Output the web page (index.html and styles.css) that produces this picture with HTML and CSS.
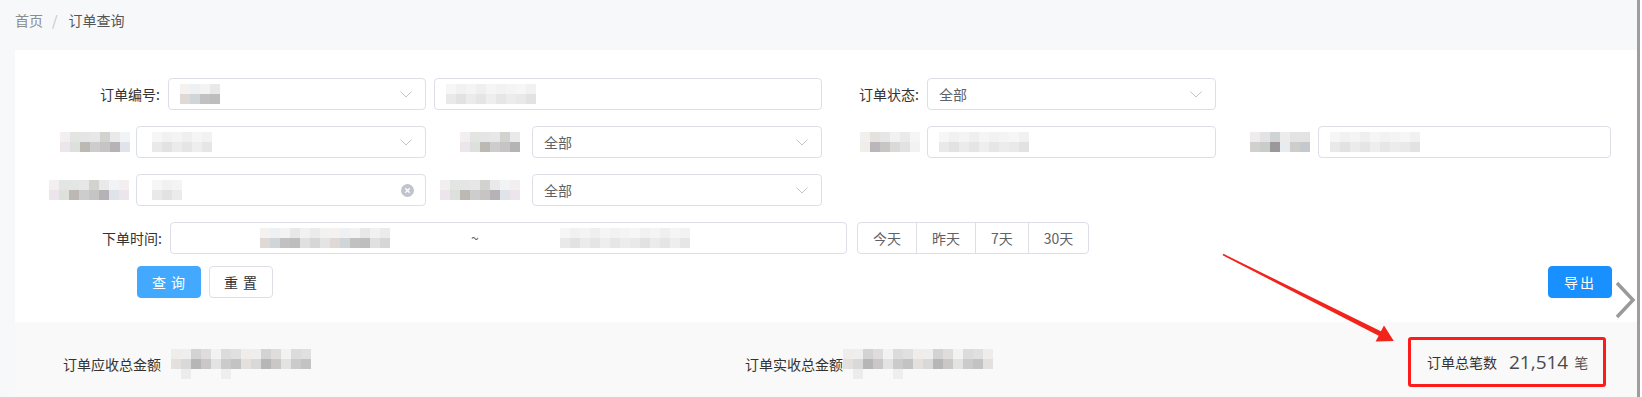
FILE: index.html
```html
<!DOCTYPE html>
<html lang="zh-CN">
<head>
<meta charset="utf-8">
<title>订单查询</title>
<link rel="stylesheet" href="styles.css">
</head>
<body>
<div class="page">
  <div class="main">
    <div class="crumb">
      <span class="crumb-link">首页</span>
      <span class="crumb-sep">/</span>
      <span class="crumb-cur">订单查询</span>
    </div>

    <div class="panel">
      <div class="row">
        <label class="lbl l153">订单编号:</label>
        <div class="ctl sel w258"><span class="mz mz-val m40"></span><svg class="arr" viewBox="0 0 12 7"><polyline points="0.5,0.5 6,6 11.5,0.5"/></svg></div>
        <div class="ctl inp w388 ml8"><span class="mz mz-soft m90"></span></div>
        <label class="lbl l105">订单状态:</label>
        <div class="ctl sel w289"><span class="val">全部</span><svg class="arr" viewBox="0 0 12 7"><polyline points="0.5,0.5 6,6 11.5,0.5"/></svg></div>
      </div>

      <div class="row">
        <label class="lbl l121 p6"><span class="mz mz-label m70"></span></label>
        <div class="ctl sel w290"><span class="mz mz-soft m60 ml4"></span><svg class="arr" viewBox="0 0 12 7"><polyline points="0.5,0.5 6,6 11.5,0.5"/></svg></div>
        <label class="lbl l106 p12"><span class="mz mz-label m60"></span></label>
        <div class="ctl sel w290"><span class="val">全部</span><svg class="arr" viewBox="0 0 12 7"><polyline points="0.5,0.5 6,6 11.5,0.5"/></svg></div>
        <label class="lbl l105 p7"><span class="mz mz-dark m60"></span></label>
        <div class="ctl inp w289"><span class="mz mz-soft m90"></span></div>
        <label class="lbl l102 p8"><span class="mz mz-deep m60"></span></label>
        <div class="ctl inp w293"><span class="mz mz-soft m90"></span></div>
      </div>

      <div class="row">
        <label class="lbl l121 p7"><span class="mz mz-label m80"></span></label>
        <div class="ctl inp w290 clearable"><span class="mz mz-soft m30 ml4"></span><svg class="clear" viewBox="0 0 14 14"><circle cx="7" cy="7" r="7"/><path d="M4.6 4.6 9.4 9.4M9.4 4.6 4.6 9.4"/></svg></div>
        <label class="lbl l106 p12"><span class="mz mz-label m80"></span></label>
        <div class="ctl sel w290"><span class="val">全部</span><svg class="arr" viewBox="0 0 12 7"><polyline points="0.5,0.5 6,6 11.5,0.5"/></svg></div>
      </div>

      <div class="row">
        <label class="lbl l155">下单时间:</label>
        <div class="ctl range w677">
          <span class="mz mz-val m130 range-start"></span>
          <span class="range-sep">~</span>
          <span class="mz mz-soft m130 range-end"></span>
        </div>
        <div class="btn-group">
          <button class="seg">今天</button>
          <button class="seg">昨天</button>
          <button class="seg">7天</button>
          <button class="seg">30天</button>
        </div>
      </div>

      <div class="row row-btns">
        <button class="btn btn-primary">查 询</button>
        <button class="btn btn-plain">重 置</button>
        <button class="btn btn-export">导出</button>
      </div>
    </div>

    <div class="summary">
      <div class="sum-item">
        <span class="sum-label">订单应收总金额</span>
        <span class="mz mz3 m140 ml10"></span>
      </div>
      <div class="sum-item">
        <span class="sum-label">订单实收总金额</span>
        <span class="mz mz3 m150"></span>
      </div>
      <div class="sum-box">
        <span class="sum-label">订单总笔数</span>
        <span class="sum-num">21,514</span>
        <span class="sum-unit">笔</span>
      </div>
    </div>
  </div>
  <div class="edge"></div>
  <div class="edge-white"></div>
</div>

<svg class="chev" viewBox="0 0 22 38"><polyline points="3,2 19,19 3,36"/></svg>

<svg class="annot" viewBox="0 0 1642 397">
  <polygon points="1223.4,253.8 1380.9,331.3 1384,325.6 1393.8,341 1375.6,341.4 1378.7,335.7 1222.6,255.2"/>
</svg>
</body>
</html>
```

FILE: styles.css
```css
* { box-sizing: border-box; }

body {
  margin: 0;
  width: 1642px;
  height: 397px;
  overflow: hidden;
  position: relative;
  background: #f7f8fa;
  font-family: "Noto Sans CJK SC", "Noto Sans", sans-serif;
  font-size: 14px;
  color: #333;
}

.page { display: flex; height: 397px; }
.main { width: 1622px; margin-left: 15px; display: flex; flex-direction: column; }
.edge { width: 3px; background: #9e9e9e; }
.edge-white { flex: 1; background: #fff; }

/* breadcrumb */
.crumb { height: 50px; padding-top: 10px; line-height: 20px; display: flex; }
.crumb-link { color: #8c8c8c; }
.crumb-sep { color: #c0c4cc; margin: 0 11px 0 9px; }
.crumb-cur { color: #555; }

/* panel */
.panel {
  background: #fff;
  padding: 28px 25px 24px 0;
  display: flex;
  flex-direction: column;
  gap: 16px;
}
.row { display: flex; align-items: center; height: 32px; }
.row-btns { margin-top: -4px; padding-left: 122px; }

.lbl {
  flex: none;
  display: flex;
  justify-content: flex-end;
  align-items: center;
  padding-right: 8px;
  color: #333;
  white-space: nowrap;
  line-height: 20px;
}
.l153 { width: 153px; }
.l155 { width: 155px; }
.l121 { width: 121px; }
.l106 { width: 106px; }
.l105 { width: 105px; }
.l102 { width: 102px; }
.p6 { padding-right: 6px; }
.p7 { padding-right: 7px; }
.p8 { padding-right: 8px; }
.p12 { padding-right: 12px; }

.ctl {
  flex: none;
  height: 32px;
  border: 1px solid #dcdfe6;
  border-radius: 4px;
  background: #fff;
  display: flex;
  align-items: center;
  padding: 0 13px 0 11px;
  color: #606266;
  line-height: 20px;
}
.sel, .clearable { justify-content: space-between; }
.w258 { width: 258px; }
.w388 { width: 388px; }
.w289 { width: 289px; }
.w290 { width: 290px; }
.w293 { width: 293px; }
.w677 { width: 677px; }
.ml4 { margin-left: 4px; }
.ml8 { margin-left: 8px; }
.ml10 { margin-left: 10px; }

.val { color: #606266; }
.arr { width: 12px; height: 7px; flex: none; }
.arr polyline { fill: none; stroke: #c0c4cc; stroke-width: 1; }
.clear { width: 13px; height: 13px; flex: none; margin-right: -2px; }
.clear circle { fill: #c0c4cc; }
.clear path { stroke: #fff; stroke-width: 1.4; fill: none; }

/* date range */
.range { padding: 0; }
.range-start { margin-left: 89px; }
.range-sep { margin-left: 81px; color: #606266; width: 8px; text-align: center; }
.range-end { margin-left: 81px; }

.btn-group { display: flex; margin-left: 10px; }
.seg {
  height: 32px;
  padding: 0 15px;
  border: 1px solid #dcdfe6;
  background: #fff;
  color: #606266;
  font: inherit;
  font-size: 14px;
  line-height: 20px;
  margin-left: -1px;
}
.seg:first-child { border-radius: 4px 0 0 4px; margin-left: 0; }
.seg:last-child { border-radius: 0 4px 4px 0; }

.btn {
  width: 64px;
  height: 32px;
  border-radius: 4px;
  font: inherit;
  font-size: 14px;
  line-height: 20px;
  padding: 0;
  letter-spacing: 1px;
}
.btn-primary { background: #42a9ff; border: 1px solid #42a9ff; color: #fff; }
.btn-plain { background: #fff; border: 1px solid #dcdfe6; color: #333; margin-left: 8px; }
.btn-export { background: #1890ff; border: 1px solid #1890ff; color: #fff; margin-left: auto; letter-spacing: 2px; }

/* mosaic (redacted content) */
.mz {
  display: inline-block;
  flex: none;
  height: 20px;
  background-image:
    repeating-linear-gradient(90deg, var(--a1) 0 10px, var(--a2) 10px 20px, var(--a3) 20px 30px, var(--a4) 30px 40px, var(--a5) 40px 50px, var(--a6) 50px 60px, var(--a7) 60px 70px),
    repeating-linear-gradient(90deg, var(--b1) 0 10px, var(--b2) 10px 20px, var(--b3) 20px 30px, var(--b4) 30px 40px, var(--b5) 40px 50px, var(--b6) 50px 60px, var(--b7) 60px 70px);
  background-size: 100% 10px, 100% 10px;
  background-position: 0 0, 0 10px;
  background-repeat: no-repeat;
}
.mz-val {
  --a1: #f4f1f0; --a2: #eef0f1; --a3: #f3f3f3; --a4: #e8e8e8; --a5: #f1f1f1; --a6: #ebebeb; --a7: #f2f2f2;
  --b1: #ded9d6; --b2: #d0d6d8; --b3: #c1c1c1; --b4: #bebebe; --b5: #e0e0e0; --b6: #d6d6d6; --b7: #e4e4e4;
}
.mz-soft {
  --a1: #f6f6f6; --a2: #f1f1f1; --a3: #f4f4f4; --a4: #efefef; --a5: #f5f5f5; --a6: #f2f2f2; --a7: #f4f4f4;
  --b1: #e9e9e9; --b2: #e2e2e2; --b3: #ebebeb; --b4: #e5e5e5; --b5: #eeeeee; --b6: #e6e6e6; --b7: #ececec;
}
.mz-label {
  --a1: #f3eff1; --a2: #e2e5e2; --a3: #e4e5e5; --a4: #e7e7e7; --a5: #d2d3cf; --a6: #e9e9e9; --a7: #f1f3f5;
  --b1: #ece6ec; --b2: #dde0db; --b3: #bcb9b4; --b4: #cdcdcd; --b5: #c7c5c3; --b6: #b6b3b6; --b7: #e0e4ea;
}
.mz-dark {
  --a1: #f2f0ee; --a2: #e4e1df; --a3: #e6e6e6; --a4: #f1f1f3; --a5: #eaeaea; --a6: #f5f5f5; --a7: #f5f5f5;
  --b1: #f1ede8; --b2: #b9b7b9; --b3: #c8c6c4; --b4: #d9d9d9; --b5: #e2e2e2; --b6: #f2f2f2; --b7: #f5f5f5;
}
.mz-deep {
  --a1: #efeced; --a2: #e3e3e3; --a3: #cfd3d4; --a4: #ececec; --a5: #e3e3e3; --a6: #e3e3e3; --a7: #f5f5f5;
  --b1: #d2d0ce; --b2: #c9cdc9; --b3: #9b979b; --b4: #e9ecee; --b5: #cfcdcb; --b6: #c5c8cc; --b7: #f2f4f2;
}
.mz3 {
  height: 30px;
  --a1: #efedec; --a2: #eeeeee; --a3: #d3d3d3; --a4: #dfdddc; --a5: #f2f2f2; --a6: #dcdcdc; --a7: #e0e0e0;
  --b1: #e4e0de; --b2: #d9d9d9; --b3: #b7b6b6; --b4: #c9c7c7; --b5: #e3e3e3; --b6: #cbcbcb; --b7: #c3c3c3;
  background-image:
    repeating-linear-gradient(90deg, var(--a1) 0 10px, var(--a2) 10px 20px, var(--a3) 20px 30px, var(--a4) 30px 40px, var(--a5) 40px 50px, var(--a6) 50px 60px, var(--a7) 60px 70px),
    repeating-linear-gradient(90deg, var(--b1) 0 10px, var(--b2) 10px 20px, var(--b3) 20px 30px, var(--b4) 30px 40px, var(--b5) 40px 50px, var(--b6) 50px 60px, var(--b7) 60px 70px),
    linear-gradient(90deg, transparent 0 10px, #ececec 10px 20px, transparent 20px 50px, #eeeeee 50px 60px, transparent 60px);
  background-size: 100% 10px, 100% 10px, 100% 10px;
  background-position: 0 0, 0 10px, 0 20px;
}
.m30 { width: 30px; }
.m40 { width: 40px; }
.m60 { width: 60px; }
.m70 { width: 70px; }
.m80 { width: 80px; }
.m90 { width: 90px; }
.m130 { width: 130px; }
.m140 { width: 140px; }
.m150 { width: 150px; }

/* summary */
.summary {
  flex: 1;
  background: #f9f9f9;
  display: grid;
  grid-template-columns: 682px 663px auto;
  padding: 15px 0 0 48px;
  align-items: start;
}
.sum-item { display: flex; align-items: center; height: 50px; padding-top: 4px; }
.sum-label { color: #333; line-height: 20px; }
.sum-box {
  width: 198px;
  height: 50px;
  border: 3px solid #fd1c1c;
  border-radius: 3px;
  display: flex;
  align-items: center;
  padding-left: 16px;
}
.sum-num {
  font-family: "Open Sans", "Noto Sans", sans-serif;
  font-size: 19px;
  color: #4a4a4a;
  margin: 0 6px 0 12px;
  line-height: 24px;
}
.sum-unit { color: #555; line-height: 20px; }

/* overlays */
.chev { position: absolute; left: 1614px; top: 281px; width: 22px; height: 38px; }
.chev polyline { fill: none; stroke: #9a9a9a; stroke-width: 3.5; }

.annot { position: absolute; left: 0; top: 0; width: 1642px; height: 397px; pointer-events: none; }
.annot polygon { fill: #f2231b; }
```
